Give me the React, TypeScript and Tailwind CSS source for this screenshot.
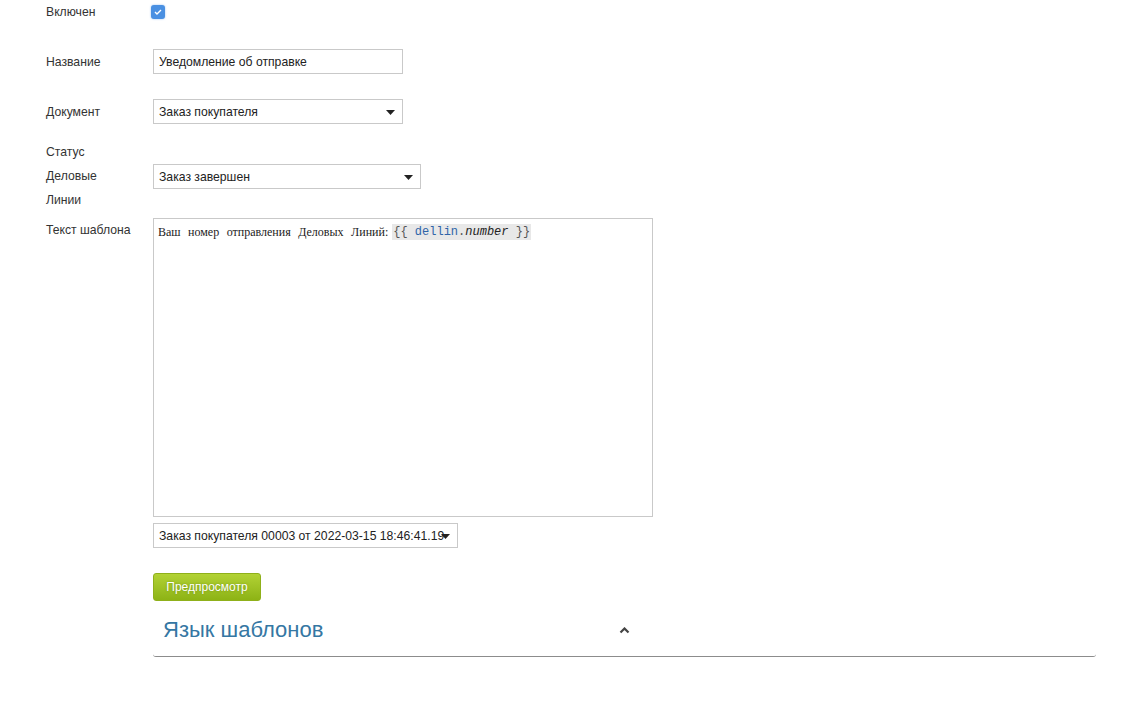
import React from 'react'

const Caret = () => (
  <svg width="9" height="5" viewBox="0 0 9 5" className="shrink-0">
    <path d="M0 0h9L4.5 5z" fill="#222" />
  </svg>
)

const Select = ({ value, width }: { value: string; width: string }) => (
  <div className={`relative flex h-[25px] items-center overflow-hidden border border-[#c9c9c9] bg-white pl-[5px] pt-[2px] ${width}`}>
    <span className="whitespace-nowrap text-[12.2px] text-[#222]">{value}</span>
    <span className="absolute right-[7px] top-[10px]">
      <Caret />
    </span>
  </div>
)

const Label = ({ children, className = 'pr-[15px]' }: { children: React.ReactNode; className?: string }) => (
  <div className={`w-[107px] shrink-0 text-[12.2px] text-[#333] ${className}`}>{children}</div>
)

export default function App() {
  return (
    <div className="min-h-[706px] bg-white pl-[46px] pt-[5px] font-['Liberation_Sans',Arial,sans-serif]">
      <div className="flex h-[14px] items-center">
        <Label className="leading-[14px]">Включен</Label>
        <div className="-ml-[2px] flex h-[14px] w-[14px] items-center justify-center rounded-[3px] bg-[#4a90e2] shadow-[0_0_2px_rgba(74,144,226,0.6)]">
          <svg width="8" height="6" viewBox="0 0 8 6">
            <path d="M1 3l2 2 4-4" stroke="#fff" strokeWidth="1.4" fill="none" />
          </svg>
        </div>
      </div>

      <div className="mt-[30px] flex items-center">
        <Label className="pr-[15px] pt-[2px]">Название</Label>
        <div className="flex h-[25px] w-[250px] items-center border border-[#c9c9c9] bg-white pl-[5px] pt-[2px] text-[12.2px] text-[#222]">
          Уведомление об отправке
        </div>
      </div>

      <div className="mt-[25px] flex items-center">
        <Label className="pr-[15px] pt-[2px]">Документ</Label>
        <Select value="Заказ покупателя" width="w-[250px]" />
      </div>

      <div className="mt-[16px] flex items-center">
        <Label className="pr-[32px] leading-[24px]">Статус Деловые Линии</Label>
        <Select value="Заказ завершен" width="w-[268px]" />
      </div>

      <div className="mt-[6px] flex items-start">
        <Label className="pr-[10px] leading-[24px]">Текст шаблона</Label>
        <div className="h-[299px] w-[500px] border border-[#c9c9c9] bg-white px-[4px] pt-[5px]">
          <div className="flex items-center whitespace-nowrap leading-[16px]">
            <span className="font-['Liberation_Serif',serif] text-[12px] text-[#222] [word-spacing:4.5px]">
              Ваш номер отправления Деловых Линий:
            </span>
            <span className="ml-[4px] bg-[#e8e8e8] px-[1px] font-['Liberation_Mono',monospace] text-[12px] text-[#555]">
              {'{{ '}
              <span className="text-[#2f64a8]">dellin</span>
              <span>.</span>
              <span className="italic text-[#222]">number</span>
              {' }}'}
            </span>
          </div>
        </div>
      </div>

      <div className="ml-[107px] mt-[6px]">
        <Select value="Заказ покупателя 00003 от 2022-03-15 18:46:41.19" width="w-[305px]" />
      </div>

      <div className="ml-[107px] mt-[25px]">
        <button className="flex h-[28px] w-[108px] items-center justify-center rounded-[3px] border border-[#8fb01a] bg-gradient-to-b from-[#b2d234] to-[#8db314] text-[12px] text-white [text-shadow:0_0_2px_rgba(90,120,0,0.6)]">
          Предпросмотр
        </button>
      </div>

      <div className="ml-[107px] mt-[8px] w-[943px] rounded-b-[3px] border-b border-[#8c8c8c] pb-[13px] pl-[10px] pt-[8px]">
        <div className="flex w-[467px] items-center justify-between">
          <span className="text-[22px] leading-[26px] text-[#3577a3]">Язык шаблонов</span>
          <svg width="11" height="7" viewBox="0 0 11 7">
            <path d="M1.5 5.5L5.5 1.5l4 4" stroke="#444" strokeWidth="2.2" fill="none" />
          </svg>
        </div>
      </div>
    </div>
  )
}
